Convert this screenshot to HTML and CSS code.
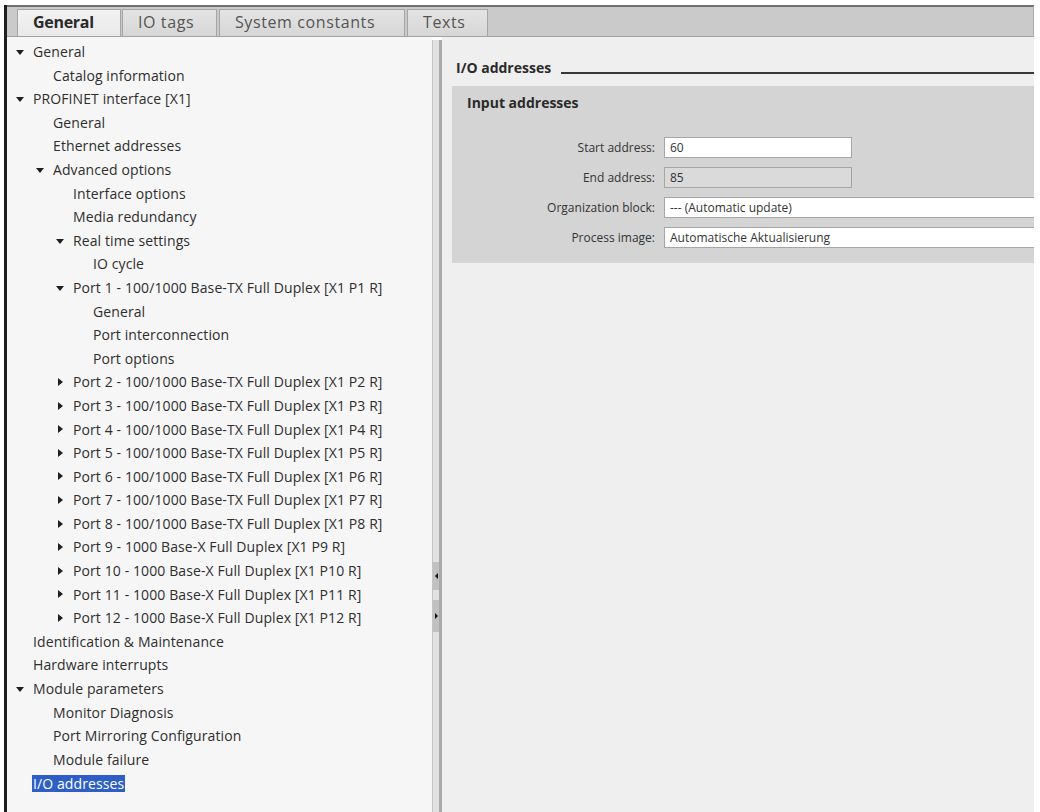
FILE: index.html
```html
<!DOCTYPE html>
<html>
<head>
<meta charset="utf-8">
<link rel="stylesheet" href="styles.css">
</head>
<body>
<div class="window">
  <div class="tabbar">
    <div class="tab tab-general active">General</div>
    <div class="tab tab-io">IO tags</div>
    <div class="tab tab-sys">System constants</div>
    <div class="tab tab-texts">Texts</div>
  </div>
  <div class="content">
    <div class="tree">
      <div class="row l0"><span class="tg down"></span>General</div>
      <div class="row l1"><span class="tg"></span>Catalog information</div>
      <div class="row l0"><span class="tg down"></span>PROFINET interface [X1]</div>
      <div class="row l1"><span class="tg"></span>General</div>
      <div class="row l1"><span class="tg"></span>Ethernet addresses</div>
      <div class="row l1"><span class="tg down"></span>Advanced options</div>
      <div class="row l2"><span class="tg"></span>Interface options</div>
      <div class="row l2"><span class="tg"></span>Media redundancy</div>
      <div class="row l2"><span class="tg down"></span>Real time settings</div>
      <div class="row l3"><span class="tg"></span>IO cycle</div>
      <div class="row l2"><span class="tg down"></span>Port 1 - 100/1000 Base-TX Full Duplex [X1 P1 R]</div>
      <div class="row l3"><span class="tg"></span>General</div>
      <div class="row l3"><span class="tg"></span>Port interconnection</div>
      <div class="row l3"><span class="tg"></span>Port options</div>
      <div class="row l2"><span class="tg right"></span>Port 2 - 100/1000 Base-TX Full Duplex [X1 P2 R]</div>
      <div class="row l2"><span class="tg right"></span>Port 3 - 100/1000 Base-TX Full Duplex [X1 P3 R]</div>
      <div class="row l2"><span class="tg right"></span>Port 4 - 100/1000 Base-TX Full Duplex [X1 P4 R]</div>
      <div class="row l2"><span class="tg right"></span>Port 5 - 100/1000 Base-TX Full Duplex [X1 P5 R]</div>
      <div class="row l2"><span class="tg right"></span>Port 6 - 100/1000 Base-TX Full Duplex [X1 P6 R]</div>
      <div class="row l2"><span class="tg right"></span>Port 7 - 100/1000 Base-TX Full Duplex [X1 P7 R]</div>
      <div class="row l2"><span class="tg right"></span>Port 8 - 100/1000 Base-TX Full Duplex [X1 P8 R]</div>
      <div class="row l2"><span class="tg right"></span>Port 9 - 1000 Base-X Full Duplex [X1 P9 R]</div>
      <div class="row l2"><span class="tg right"></span>Port 10 - 1000 Base-X Full Duplex [X1 P10 R]</div>
      <div class="row l2"><span class="tg right"></span>Port 11 - 1000 Base-X Full Duplex [X1 P11 R]</div>
      <div class="row l2"><span class="tg right"></span>Port 12 - 1000 Base-X Full Duplex [X1 P12 R]</div>
      <div class="row l0"><span class="tg"></span>Identification &amp; Maintenance</div>
      <div class="row l0"><span class="tg"></span>Hardware interrupts</div>
      <div class="row l0"><span class="tg down"></span>Module parameters</div>
      <div class="row l1"><span class="tg"></span>Monitor Diagnosis</div>
      <div class="row l1"><span class="tg"></span>Port Mirroring Configuration</div>
      <div class="row l1"><span class="tg"></span>Module failure</div>
      <div class="row l0"><span class="tg"></span><span class="sel">I/O addresses</span></div>
    </div>
    <div class="splitter">
      <div class="handle"><span class="arr-left"></span></div>
      <div class="handle handle2"><span class="arr-right"></span></div>
    </div>
    <div class="detail">
      <div class="heading">
        <span class="heading-text">I/O addresses</span>
        <span class="heading-line"></span>
      </div>
      <div class="group">
        <div class="group-title">Input addresses</div>
        <div class="fields">
          <div class="lbl">Start address:</div>
          <div class="field short">60</div>
          <div class="lbl">End address:</div>
          <div class="field short disabled">85</div>
          <div class="lbl">Organization block:</div>
          <div class="field wide">--- (Automatic update)</div>
          <div class="lbl">Process image:</div>
          <div class="field wide">Automatische Aktualisierung</div>
        </div>
      </div>
    </div>
  </div>
</div>
</body>
</html>
```

FILE: styles.css
```css
html, body {
  margin: 0;
  padding: 0;
  background: #ffffff;
  height: 812px;
  overflow: hidden;
}

body {
  font-family: "Open Sans", "Noto Sans", "Liberation Sans", sans-serif;
  color: #333333;
}

.window {
  margin: 5px 0 0 4px;
  width: 1030px;
  height: 807px;
  border-left: 3px solid #1e1e1e;
  box-sizing: border-box;
  display: flex;
  flex-direction: column;
}

/* Tabs */
.tabbar {
  height: 32px;
  flex: none;
  box-sizing: border-box;
  background: #cacaca;
  border-top: 2px solid #707070;
  border-bottom: 1px solid #a2a2a2;
  border-right: 1px solid #a8a8a8;
  display: flex;
  align-items: flex-end;
  padding-left: 10px;
}

.tab {
  height: 27px;
  box-sizing: border-box;
  padding-left: 15px;
  font-size: 16px;
  letter-spacing: 0.6px;
  line-height: 25px;
  color: #555555;
  background: linear-gradient(#e4e4e4, #d6d6d6);
  border: 1px solid #a5a5a5;
  border-bottom: none;
  margin-right: 2px;
  white-space: nowrap;
}

.tab.active {
  background: linear-gradient(#f2f2f2, #e9e9e9);
  font-weight: 700;
  letter-spacing: -0.3px;
  color: #2a2a2a;
  margin-right: 1px;
}

.tab-general { width: 104px; }
.tab-io { width: 95px; }
.tab-sys { width: 186px; }
.tab-texts { width: 81px; }

/* Content */
.content {
  flex: 1;
  display: flex;
  min-height: 0;
}

.tree {
  width: 425px;
  flex: none;
  background: #f6f6f6;
  padding-top: 3px;
  box-sizing: border-box;
  font-size: 14px;
  letter-spacing: 0.1px;
  color: #2e2e2e;
}

.row {
  height: 23.6px;
  line-height: 23.6px;
  display: flex;
  align-items: center;
  white-space: nowrap;
}

.l0 { padding-left: 6px; }
.l1 { padding-left: 26px; }
.l2 { padding-left: 46px; }
.l3 { padding-left: 66px; }

.tg {
  width: 20px;
  flex: none;
  height: 10px;
}

.tg.down::before {
  content: "";
  display: block;
  margin: 3px 0 0 3px;
  width: 0;
  height: 0;
  border-left: 4px solid transparent;
  border-right: 4px solid transparent;
  border-top: 5px solid #1f1f1f;
}

.tg.right::before {
  content: "";
  display: block;
  margin: 1px 0 0 5px;
  width: 0;
  height: 0;
  border-top: 4px solid transparent;
  border-bottom: 4px solid transparent;
  border-left: 5px solid #1f1f1f;
}

.sel {
  background: #2d5fc6;
  color: #ffffff;
  line-height: 17px;
  padding: 0 1px;
  margin-left: -1px;
}

/* Splitter */
.splitter {
  width: 10px;
  flex: none;
  box-sizing: border-box;
  margin-top: 3px;
  background: #e2e2e2;
  border-left: 1px solid #c4c4c4;
  border-right: 3px solid #a9a9a9;
  display: flex;
  flex-direction: column;
}

.handle {
  margin-top: 522px;
  height: 28px;
  background: #c0c0c0;
  display: flex;
  align-items: center;
  padding-left: 2px;
}

.handle2 {
  margin-top: 10px;
  height: 32px;
}

.arr-left {
  width: 0;
  height: 0;
  border-top: 3px solid transparent;
  border-bottom: 3px solid transparent;
  border-right: 3px solid #111111;
}

.arr-right {
  width: 0;
  height: 0;
  border-top: 3px solid transparent;
  border-bottom: 3px solid transparent;
  border-left: 3px solid #111111;
}

/* Detail */
.detail {
  flex: 1;
  background: #efefef;
  padding-top: 20px;
  box-sizing: border-box;
}

.heading {
  display: flex;
  align-items: center;
  height: 20px;
  padding-left: 14px;
}

.heading-text {
  font-size: 14px;
  font-weight: 700;
  color: #2a2a2a;
  white-space: nowrap;
}

.heading-line {
  flex: 1;
  height: 2px;
  background: #3a3a3a;
  margin: 12px 0 0 10px;
}

.group {
  margin: 9px 0 0 10px;
  background: #d4d4d4;
  height: 177px;
  box-sizing: border-box;
  padding-top: 7px;
  overflow: hidden;
}

.group-title {
  font-size: 14px;
  font-weight: 700;
  color: #2a2a2a;
  line-height: 20px;
  padding-left: 15px;
}

.fields {
  margin-top: 24px;
  display: grid;
  grid-template-columns: 203px 1fr;
  column-gap: 9px;
  row-gap: 9px;
  align-items: center;
}

.lbl {
  text-align: right;
  font-size: 12px;
  color: #333333;
  white-space: nowrap;
}

.field {
  height: 21px;
  box-sizing: border-box;
  background: #ffffff;
  border: 1px solid #a6a6a6;
  font-size: 12px;
  line-height: 19px;
  padding-left: 5px;
  color: #333333;
  white-space: nowrap;
}

.field.short { width: 188px; }
.field.disabled { background: #dadada; }
.field.wide { border-right: none; }
```
